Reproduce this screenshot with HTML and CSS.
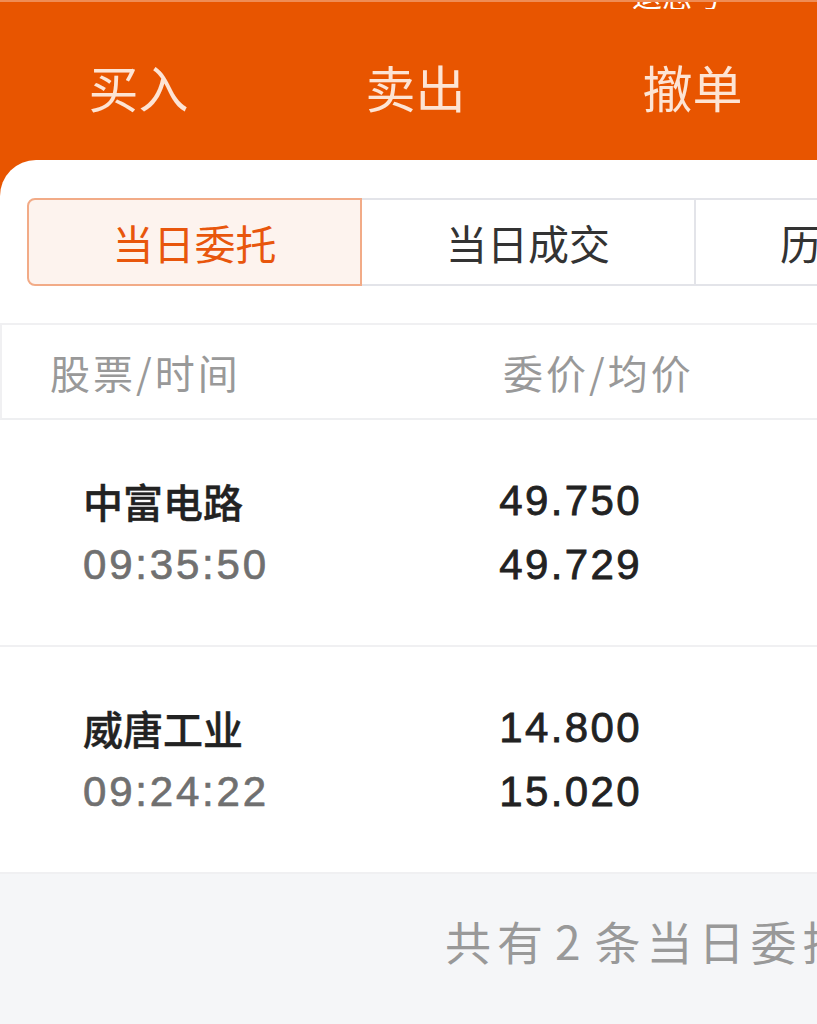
FILE: index.html
```html
<!DOCTYPE html>
<html lang="zh-CN">
<head>
    <meta charset="UTF-8">
    <meta name="viewport" content="width=device-width, initial-scale=1.0">
    <title>当日委托</title>
    <link rel="stylesheet" href="styles.css">
</head>
<body>
    <div class="top">
        <div class="status"><span>退思号</span></div>
        <div class="trade-nav">
            <div class="nav-item">买入</div>
            <div class="nav-item">卖出</div>
            <div class="nav-item">撤单</div>
        </div>
    </div>

    <div class="sheet">
        <div class="card">
            <!-- 委托/成交切换 -->
            <div class="tabs">
                <div class="tab active">当日委托</div>
                <div class="tab">当日成交</div>
                <div class="tab">历史委托</div>
            </div>

            <div class="table-head">
                <div class="col-stock">股票/时间</div>
                <div class="col-price">委价/均价</div>
            </div>

            <div class="order-row">
                <div class="stock">
                    <div class="name">中富电路</div>
                    <div class="time">09:35:50</div>
                </div>
                <div class="price">
                    <div>49.750</div>
                    <div>49.729</div>
                </div>
            </div>

            <div class="order-row">
                <div class="stock">
                    <div class="name">威唐工业</div>
                    <div class="time">09:24:22</div>
                </div>
                <div class="price">
                    <div>14.800</div>
                    <div>15.020</div>
                </div>
            </div>

            <div class="summary">共有<span class="num">2</span>条当日委托</div>
        </div>
    </div>
</body>
</html>
```

FILE: styles.css
```css
html, body {
    margin: 0;
    padding: 0;
}

body {
    width: 817px;
    height: 1024px;
    overflow: hidden;
    background-color: #f5f6f8;
    font-family: "Noto Sans CJK SC", "Liberation Sans", sans-serif;
}

.top {
    background-color: #e85500;
    border-top: 2px solid #ef8c55;
}

.status {
    height: 7px;
    overflow: hidden;
    display: flex;
    justify-content: flex-end;
    align-items: flex-end;
    padding-right: 95px;
    color: #fff;
    font-size: 30px;
}

.status span {
    line-height: 30px;
    white-space: nowrap;
}

.trade-nav {
    display: grid;
    grid-template-columns: 277px 277px 277px;
    height: 110px;
    align-items: center;
    padding-top: 22px;
    padding-bottom: 19px;
}

.nav-item {
    text-align: center;
    font-size: 50px;
    color: #fde4d4;
    line-height: 60px;
}

.sheet {
    background-color: #e85500;
}

.card {
    width: 1100px;
    background-color: #fff;
    border-top-left-radius: 36px;
    padding-top: 38px;
}

.tabs {
    display: flex;
    margin-left: 27px;
    margin-bottom: 37px;
}

.tab {
    width: 332px;
    height: 84px;
    line-height: 84px;
    text-align: center;
    font-size: 41px;
    color: #333;
    border: 2px solid #e3e4e9;
    border-left: none;
}

.tab.active {
    width: 331px;
    color: #e8560c;
    background-color: #fdf3ee;
    border: 2px solid #f2ab87;
    border-radius: 8px 0 0 8px;
}

.table-head {
    display: flex;
    height: 93px;
    align-items: center;
    border-top: 2px solid #f0f0f2;
    border-bottom: 2px solid #eeeff1;
    border-left: 2px solid #f0f0f2;
    font-size: 40px;
    letter-spacing: 3px;
    color: #999;
}

.col-stock {
    width: 453px;
    padding-left: 48px;
}

.order-row {
    display: grid;
    grid-template-columns: 300px 257px;
    align-items: center;
    height: 225px;
    padding-left: 83px;
    border-bottom: 2px solid #f0f0f2;
}

.name {
    font-size: 40px;
    font-weight: 500;
    color: #222;
    line-height: 64px;
    -webkit-text-stroke: 0.4px #222;
}

.time {
    font-family: "Liberation Sans", sans-serif;
    font-size: 42px;
    letter-spacing: 2.8px;
    color: #707070;
    line-height: 64px;
    -webkit-text-stroke: 0.7px #707070;
}

.price {
    text-align: right;
    font-family: "Liberation Sans", sans-serif;
    font-size: 42px;
    letter-spacing: 2.4px;
    color: #222;
    line-height: 64px;
    -webkit-text-stroke: 0.8px #222;
}

.price div {
    margin-right: -2px;
}

.summary {
    background-color: #f5f6f8;
    padding-left: 445px;
    padding-top: 38px;
    height: 200px;
    font-size: 46px;
    letter-spacing: 6px;
    color: #999;
    line-height: 56px;
    white-space: nowrap;
}

.summary .num {
    margin: 0 8px 0 6px;
}
```
